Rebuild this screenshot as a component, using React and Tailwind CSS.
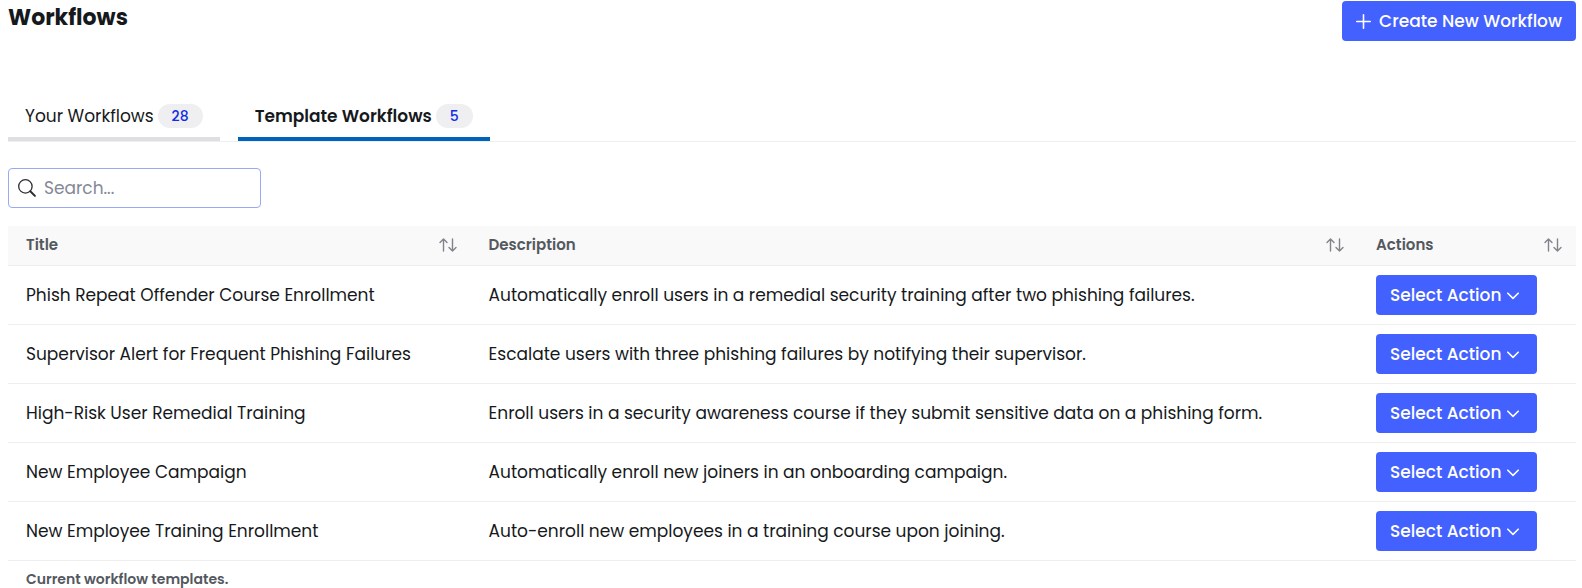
import { useState } from "react";

const tabs = [
  { id: "yours", label: "Your Workflows", count: 28 },
  { id: "templates", label: "Template Workflows", count: 5 },
];

const workflows = [
  {
    title: "Phish Repeat Offender Course Enrollment",
    description: "Automatically enroll users in a remedial security training after two phishing failures.",
  },
  {
    title: "Supervisor Alert for Frequent Phishing Failures",
    description: "Escalate users with three phishing failures by notifying their supervisor.",
  },
  {
    title: "High-Risk User Remedial Training",
    description: "Enroll users in a security awareness course if they submit sensitive data on a phishing form.",
  },
  {
    title: "New Employee Campaign",
    description: "Automatically enroll new joiners in an onboarding campaign.",
  },
  {
    title: "New Employee Training Enrollment",
    description: "Auto-enroll new employees in a training course upon joining.",
  },
];

function PlusIcon() {
  return (
    <svg viewBox="0 0 15 15" className="w-[15px] h-[15px]" fill="none" stroke="currentColor" strokeWidth="1.6" strokeLinecap="round">
      <path d="M7.5 .8v13.400M.8 7.500h13.400" />
    </svg>
  );
}

function SearchIcon() {
  return (
    <svg viewBox="0 0 18 18" className="w-[18px] h-[18px]" fill="none" stroke="currentColor" strokeLinecap="round">
      <circle cx="7.4" cy="7.4" r="6.7" strokeWidth="1.3" />
      <path d="M12.3 12.3l4.6 4.6" strokeWidth="2" />
    </svg>
  );
}

function SortIcon() {
  return (
    <svg viewBox="0 0 18 14" className="w-[18px] h-[14px]" fill="none" stroke="currentColor" strokeWidth="1.4" strokeLinecap="round" strokeLinejoin="round">
      <path d="M4.5 13V1M1 4.5L4.5 1 8 4.5" />
      <path d="M13.5 1v12M10 9.5l3.5 3.5L17 9.5" />
    </svg>
  );
}

function ChevronIcon() {
  return (
    <svg viewBox="0 0 12 8" className="mt-[2px] w-3 h-2" fill="none" stroke="currentColor" strokeWidth="1.6" strokeLinecap="round" strokeLinejoin="round">
      <path d="M.8 1.2L6 6.4l5.2-5.2" />
    </svg>
  );
}

function HeaderCell({ label }) {
  return (
    <th scope="col" className="h-[39px] pl-[18px] pr-[14px] text-left font-semibold">
      <div className="flex items-center justify-between">
        {label}
        <button type="button" aria-label={`Sort by ${label}`} className="text-[#808389]">
          <SortIcon />
        </button>
      </div>
    </th>
  );
}

function App() {
  const [activeTab, setActiveTab] = useState("templates");
  const [query, setQuery] = useState("");

  const rows = workflows.filter((w) =>
    `${w.title} ${w.description}`.toLowerCase().includes(query.toLowerCase())
  );

  return (
    <main className="bg-white pl-2 pr-[6px] pt-px text-[17px] leading-6 text-[#16191c] font-[Poppins,Inter,sans-serif]">
      <header className="flex items-start justify-between">
        <h1 className="text-[22px] leading-[34px] font-bold">Workflows</h1>
        <button
          type="button"
          className="h-10 px-[14px] flex items-center gap-2 rounded bg-[#4361ff] text-white font-medium"
        >
          <PlusIcon />
          Create New Workflow
        </button>
      </header>

      {/* Tabs */}
      <div role="tablist" className="mt-[54px] flex gap-[18px] border-b border-[#eeeeef]">
        {tabs.map((tab) => (
          <button
            key={tab.id}
            type="button"
            role="tab"
            aria-selected={activeTab === tab.id}
            onClick={() => setActiveTab(tab.id)}
            className={`h-[46px] px-[17px] flex items-center gap-1 border-b-4 ${
              activeTab === tab.id ? "border-[#0062b8] font-semibold" : "border-[#dedee3]"
            }`}
          >
            {tab.label}
            <span className="h-6 px-[14px] flex items-center rounded-full bg-[#efeff1] text-sm font-medium text-[#0f2be8]">
              {tab.count}
            </span>
          </button>
        ))}
      </div>

      {/* Search */}
      <label className="mt-[26px] w-[253px] h-10 px-[9px] flex items-center gap-2 rounded border border-[#9ba8f5] text-[#2b2d30]">
        <SearchIcon />
        <input
          type="text"
          aria-label="Search workflows"
          placeholder="Search..."
          value={query}
          onChange={(e) => setQuery(e.target.value)}
          className="min-w-0 flex-1 outline-none placeholder:text-[#858997]"
        />
      </label>

      <table className="mt-[18px] w-full table-fixed border-collapse">
        <colgroup>
          <col className="w-[29.5%]" />
          <col className="w-[56.6%]" />
          <col className="w-[13.9%]" />
        </colgroup>
        <thead className="bg-[#f9f9f9] text-[15px] text-[#54585f]">
          <tr className="border-b border-[#eeeeef]">
            <HeaderCell label="Title" />
            <HeaderCell label="Description" />
            <HeaderCell label="Actions" />
          </tr>
        </thead>
        <tbody>
          {rows.map((row) => (
            <tr key={row.title} className="border-b border-[#eeeeef]">
              <td className="px-[18px] py-[9px]">{row.title}</td>
              <td className="px-[18px] py-[9px]">{row.description}</td>
              <td className="px-[18px] py-[9px]">
                <button
                  type="button"
                  aria-haspopup="menu"
                  className="h-10 w-[161px] px-[14px] flex items-center gap-[6px] rounded bg-[#4361ff] text-white font-medium whitespace-nowrap"
                >
                  Select Action
                  <ChevronIcon />
                </button>
              </td>
            </tr>
          ))}
        </tbody>
      </table>
      <p className="px-[18px] pt-2 text-sm font-semibold text-[#54585f]">Current workflow templates.</p>
    </main>
  );
}

export default App;
